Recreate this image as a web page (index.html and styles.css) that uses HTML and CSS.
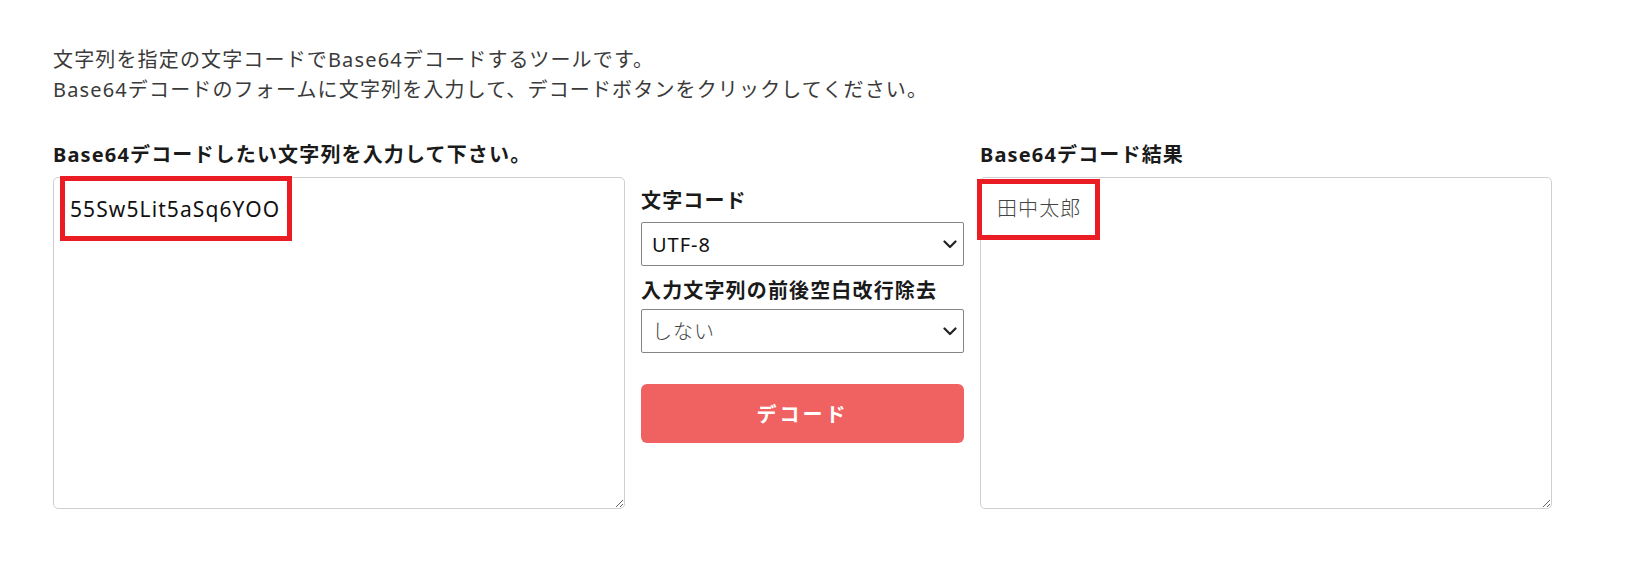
FILE: index.html
```html
<!DOCTYPE html>
<html lang="ja">
<head>
<meta charset="utf-8">
<title>Base64デコード</title>
<link rel="stylesheet" href="styles.css">
</head>
<body>
<main class="page">
  <div class="intro">
    <p>文字列を指定の文字コードでBase64デコードするツールです。</p>
    <p>Base64デコードのフォームに文字列を入力して、デコードボタンをクリックしてください。</p>
  </div>
  <div class="tool">
    <div class="col">
      <label class="label" for="src">Base64デコードしたい文字列を入力して下さい。</label>
      <div class="area-wrap">
        <textarea id="src" class="area">55Sw5Lit5aSq6YOO</textarea>
        <span class="mark mark-left"></span>
      </div>
    </div>
    <div class="col mid">
      <label class="label" for="enc">文字コード</label>
      <div class="select-wrap">
        <select id="enc" class="select"><option>UTF-8</option></select>
        <svg class="chev" viewBox="0 0 14 9" width="14" height="9"><path d="M1.5 1.5 L7 7 L12.5 1.5" fill="none" stroke="#222" stroke-width="2.2" stroke-linecap="round" stroke-linejoin="round"/></svg>
      </div>
      <label class="label label2" for="trim">入力文字列の前後空白改行除去</label>
      <div class="select-wrap">
        <select id="trim" class="select light"><option>しない</option></select>
        <svg class="chev" viewBox="0 0 14 9" width="14" height="9"><path d="M1.5 1.5 L7 7 L12.5 1.5" fill="none" stroke="#222" stroke-width="2.2" stroke-linecap="round" stroke-linejoin="round"/></svg>
      </div>
      <button class="btn" type="button">デコード</button>
    </div>
    <div class="col">
      <label class="label" for="dst">Base64デコード結果</label>
      <div class="area-wrap">
        <textarea id="dst" class="area result" readonly>田中太郎</textarea>
        <span class="mark mark-right"></span>
      </div>
    </div>
  </div>
</main>
</body>
</html>
```
FILE: styles.css
```css
html, body {
  margin: 0;
  padding: 0;
  background: #fff;
}
body {
  font-family: "Noto Sans", "Noto Sans CJK JP", sans-serif;
  font-size: 20px;
  letter-spacing: 1.15px;
  color: #222;
}
.page {
  padding: 45px 0 0 53px;
}
.intro p {
  margin: 0;
  line-height: 30px;
  color: #3a3a3a;
}
.tool {
  margin-top: 35px;
  display: grid;
  grid-template-columns: 572px 323px 572px;
  column-gap: 16px;
  align-items: start;
}
.col {
  display: flex;
  flex-direction: column;
}
.label {
  display: block;
  font-weight: 700;
  line-height: 30px;
  margin-bottom: 7px;
  color: #1a1a1a;
}
.mid {
  padding-top: 46px;
}
.mid .label {
  margin-bottom: 6px;
}
.mid .label2 {
  margin-top: 10px;
  margin-bottom: 3px;
}
.area-wrap {
  position: relative;
}
.area {
  display: block;
  box-sizing: border-box;
  width: 572px;
  height: 332px;
  border: 1px solid #cfcfcf;
  border-radius: 5px;
  padding: 16px;
  font-family: "Noto Sans", "Noto Sans CJK JP", sans-serif;
  font-size: 21px;
  letter-spacing: 1.1px;
  line-height: 30px;
  color: #111;
  background: #fff;
  outline: none;
}
.area.result {
  font-size: 20px;
  color: #444;
  font-weight: 300;
}
.mark {
  position: absolute;
  border: 5px solid #ea1c24;
  box-sizing: border-box;
  pointer-events: none;
}
.mark-left {
  left: 7px;
  top: -1px;
  width: 232px;
  height: 65px;
}
.mark-right {
  left: -3px;
  top: 2px;
  width: 123px;
  height: 61px;
}
.select-wrap {
  position: relative;
}
.select {
  display: block;
  box-sizing: border-box;
  width: 100%;
  height: 44px;
  appearance: none;
  -webkit-appearance: none;
  border: 1px solid #858585;
  border-radius: 2px;
  background: #fff;
  padding: 0 10px;
  font-family: "Noto Sans", "Noto Sans CJK JP", sans-serif;
  font-size: 20px;
  letter-spacing: 1px;
  color: #111;
}
.select.light {
  color: #444;
  font-weight: 300;
}
.chev {
  position: absolute;
  right: 7px;
  top: 18px;
  pointer-events: none;
}
.btn {
  margin-top: 31px;
  height: 59px;
  border: none;
  border-radius: 6px;
  background: #f06262;
  color: #fff;
  font-family: "Noto Sans", "Noto Sans CJK JP", sans-serif;
  font-size: 20px;
  font-weight: 700;
  letter-spacing: 3px;
}
```
